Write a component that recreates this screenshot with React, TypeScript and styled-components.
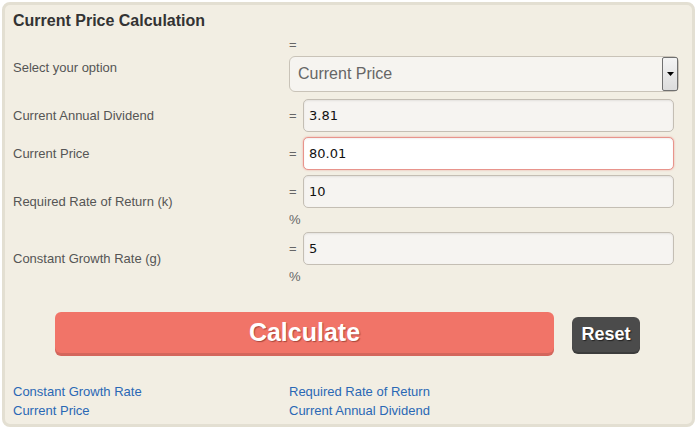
import React from "react";
import styled, { createGlobalStyle } from "styled-components";

const GlobalStyle = createGlobalStyle`
  body {
    margin: 0;
    background: #ffffff;
    font-family: "Liberation Sans", Arial, sans-serif;
  }
`;

interface FieldRow {
  label: string;
  value: string;
  unit?: string;
  active?: boolean;
}

const rows: FieldRow[] = [
  { label: "Current Annual Dividend", value: "3.81" },
  { label: "Current Price", value: "80.01", active: true },
  { label: "Required Rate of Return (k)", value: "10", unit: "%" },
  { label: "Constant Growth Rate (g)", value: "5", unit: "%" },
];

const links = [
  "Constant Growth Rate",
  "Required Rate of Return",
  "Current Price",
  "Current Annual Dividend",
];

const App = () => {
  return (
    <Page>
      <GlobalStyle />
      <Card>
        <Title>Current Price Calculation</Title>
        <Form>
          <Row $first>
            <Label $shift={5}>Select your option</Label>
            <Control>
              <Eq>=</Eq>
              <Select>
                <span>Current Price</span>
                <Arrow>
                  <svg width="7" height="4" viewBox="0 0 7 4">
                    <path d="M0 0h7L3.5 4z" fill="#000" />
                  </svg>
                </Arrow>
              </Select>
            </Control>
          </Row>
          {rows.map((row) => (
            <Row key={row.label}>
              <Label>{row.label}</Label>
              <Control>
                <InputLine>
                  <Eq>=</Eq>
                  <Input $active={row.active} defaultValue={row.value} />
                </InputLine>
                {row.unit ? <Unit>{row.unit}</Unit> : null}
              </Control>
            </Row>
          ))}
        </Form>
        <Buttons>
          <CalcButton>Calculate</CalcButton>
          <ResetButton>Reset</ResetButton>
        </Buttons>
        <Links>
          {links.map((link) => (
            <Link key={link} href="#">
              {link}
            </Link>
          ))}
        </Links>
      </Card>
    </Page>
  );
};

export default App;

const Page = styled.div`
  padding: 2px 3px 3px 2px;
  width: 698px;
  height: 430px;
  box-sizing: border-box;
`;

const Card = styled.div`
  box-sizing: border-box;
  height: 100%;
  background: #f2eee3;
  border: 3px solid #e3dfd2;
  border-radius: 8px;
  padding: 6px 10px 0 8px;
`;

const Title = styled.h2`
  margin: 0 0 6px;
  font-size: 16px;
  line-height: 20px;
  font-weight: bold;
  color: #333333;
`;

const Form = styled.div`
  display: flex;
  flex-direction: column;
  gap: 5px;
`;

const Row = styled.div<{ $first?: boolean }>`
  display: grid;
  grid-template-columns: 276px 1fr;
  align-items: center;
  margin-bottom: ${({ $first }) => ($first ? "2px" : "0")};
`;

const Label = styled.div<{ $shift?: number }>`
  font-size: 13px;
  color: #555555;
  padding-top: ${({ $shift }) => ($shift ? `${$shift}px` : "0")};
`;

const Control = styled.div`
  display: flex;
  flex-direction: column;
`;

const Eq = styled.span`
  font-size: 13px;
  line-height: 16px;
  color: #666666;
  width: 14px;
  flex-shrink: 0;
`;

const Select = styled.div`
  margin-top: 3px;
  height: 36px;
  width: 390px;
  box-sizing: border-box;
  display: flex;
  align-items: center;
  justify-content: space-between;
  padding: 0 0 0 8px;
  background: #f6f4f0;
  border: 1px solid #c9c3b8;
  border-radius: 6px;
  font-size: 16px;
  color: #666666;
`;

const Arrow = styled.span`
  display: flex;
  align-items: center;
  justify-content: center;
  width: 16px;
  height: 34px;
  box-sizing: border-box;
  border: 1px solid #707070;
  border-radius: 2px;
  background: linear-gradient(#f4f4f4, #dcdcdc);
`;

const InputLine = styled.div`
  display: flex;
  align-items: center;
`;

const Input = styled.input<{ $active?: boolean }>`
  width: 371px;
  height: 33px;
  box-sizing: border-box;
  padding: 0 0 0 5px;
  font-family: "DejaVu Sans", Verdana, sans-serif;
  font-size: 13px;
  color: #111111;
  background-color: ${({ $active }) => ($active ? "#ffffff" : "#f6f4f1")};
  border-width: 1px;
  border-style: solid;
  border-color: ${({ $active }) => ($active ? "#e8948c" : "#c4beb4")};
  border-radius: 5px;
  box-shadow: ${({ $active }) =>
    $active
      ? "0 0 2px rgba(232, 130, 120, 0.7), inset 0 1px 2px rgba(0, 0, 0, 0.06)"
      : "inset 0 1px 2px rgba(0, 0, 0, 0.08)"};
  outline: none;
`;

const Unit = styled.span`
  margin-top: 5px;
  font-size: 13px;
  line-height: 14px;
  color: #666666;
`;

const Buttons = styled.div`
  display: flex;
  align-items: flex-start;
  justify-content: center;
  gap: 18px;
  margin-top: 28px;
`;

const CalcButton = styled.button`
  width: 499px;
  height: 41px;
  border: none;
  border-radius: 6px;
  background: #f17468;
  box-shadow: 0 3px 0 #d4665c;
  color: #ffffff;
  font-family: "Liberation Sans", Arial, sans-serif;
  font-size: 25px;
  font-weight: bold;
  text-shadow: 1px 1px 1px rgba(120, 40, 30, 0.6);
  cursor: pointer;
`;

const ResetButton = styled.button`
  margin-top: 5px;
  width: 68px;
  height: 35px;
  border: none;
  border-radius: 6px;
  background: #4b4b4b;
  box-shadow: 0 2px 0 #3c3c3c;
  color: #ffffff;
  font-family: "Liberation Sans", Arial, sans-serif;
  font-size: 18px;
  font-weight: bold;
  text-shadow: 1px 1px 1px #222222;
  cursor: pointer;
`;

const Links = styled.div`
  display: grid;
  grid-template-columns: 276px 1fr;
  margin-top: 29px;
`;

const Link = styled.a`
  font-size: 13px;
  line-height: 19px;
  color: #2a68b5;
  text-decoration: none;
`;
